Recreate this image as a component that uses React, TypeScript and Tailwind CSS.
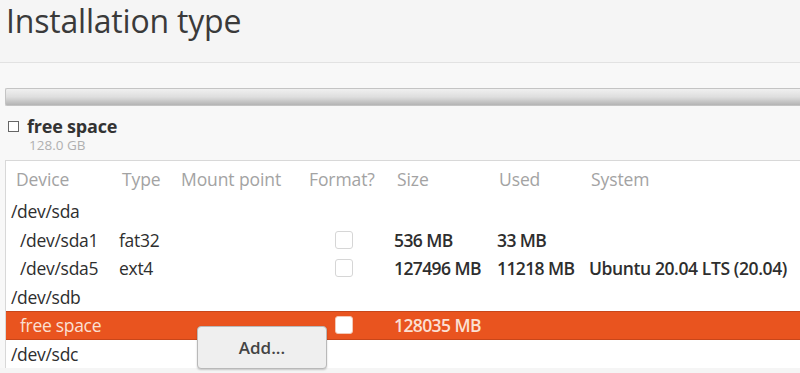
const font = { fontFamily: '"Open Sans", "DejaVu Sans", sans-serif' };

type Row = {
  device: string;
  indent?: boolean;
  type?: string;
  format?: boolean;
  size?: string;
  used?: string;
  system?: string;
  selected?: boolean;
};

const rows: Row[] = [
  { device: "/dev/sda" },
  { device: "/dev/sda1", indent: true, type: "fat32", format: true, size: "536 MB", used: "33 MB" },
  { device: "/dev/sda5", indent: true, type: "ext4", format: true, size: "127496 MB", used: "11218 MB", system: "Ubuntu 20.04 LTS (20.04)" },
  { device: "/dev/sdb" },
  { device: "free space", indent: true, format: true, size: "128035 MB", selected: true },
  { device: "/dev/sdc" },
];

const cols = "grid grid-cols-[108px_62px_128px_85px_103px_92px_1fr] items-center";

export default function App() {
  return (
    <div className="w-[800px] h-[373px] overflow-hidden bg-[#f5f5f5] text-[#333]" style={font}>
      <div className="h-[62px] pl-[6px]">
        <h1 className="text-[32px] leading-[42px] text-[#3a3a3a] tracking-[-0.2px]">Installation type</h1>
      </div>
      <div className="h-px bg-[#e2e2e2]" />
      <div className="bg-[#f8f8f8] pl-[5px]">
        <div className="h-[25px]" />
        <div className="h-[18px] border border-[#c4c4c4] border-r-0 rounded-l-[2px] bg-gradient-to-b from-[#f0f0f0] via-[#dedede] to-[#b4b4b4]" />
        <div className="flex items-center gap-[8px] pl-[3px] mt-[11px] h-[18px]">
          <span className="w-[11px] h-[11px] border border-[#666] bg-white" />
          <span className="text-[18px] leading-[18px] font-bold text-[#333] tracking-[-0.2px]">free space</span>
        </div>
        <div className="pl-[24px] mt-[3px] text-[13.5px] leading-[14px] text-[#b0b0b0]">128.0 GB</div>
        <div className="h-[8px]" />
        <div className="relative border-l border-t border-[#d8d8d8] bg-white">
          <div className={`${cols} h-[36px] pl-[5px] text-[17.5px] font-medium text-[#a3a3a3] tracking-[-0.1px]`}>
            <span className="pl-[5px]">Device</span>
            <span className="pl-[3px]">Type</span>
            <span>Mount point</span>
            <span>Format?</span>
            <span className="pl-[3px]">Size</span>
            <span className="pl-[2px]">Used</span>
            <span className="pl-[2px]">System</span>
          </div>
          {rows.map((r) => (
            <div
              key={r.device}
              className={`${cols} h-[28.5px] pl-[5px] text-[17.5px] font-medium ${
                r.selected ? "bg-[#e9541f] text-[#fbe0d4] border-y border-[#c8461a]" : "text-[#2e2e2e]"
              }`}
            >
              <span className={`tracking-[-0.3px] ${r.indent ? "pl-[9px]" : ""}`}>{r.device}</span>
              <span className="tracking-[-0.3px]">{r.type}</span>
              <span />
              <span className="pl-[26px] flex">
                {r.format && (
                  <span
                    className={`w-[18px] h-[18px] rounded-[3px] border ${
                      r.selected ? "bg-white border-[#f3c8b6]" : "bg-white border-[#d6d6d6]"
                    }`}
                  />
                )}
              </span>
              <span className="font-semibold tracking-[-0.6px] whitespace-nowrap">{r.size}</span>
              <span className="font-semibold tracking-[-0.6px] whitespace-nowrap">{r.used}</span>
              <span className="font-semibold tracking-[-0.4px] whitespace-nowrap">{r.system}</span>
            </div>
          ))}
          <div className="absolute left-[191px] top-[165px] w-[130px] h-[43px] rounded-[4px] border border-[#b9b9b9] bg-[#efefef] shadow-[0_1px_2px_rgba(0,0,0,0.2)] flex items-center justify-center text-[17px] font-semibold text-[#444]">
            Add...
          </div>
        </div>
      </div>
    </div>
  );
}
